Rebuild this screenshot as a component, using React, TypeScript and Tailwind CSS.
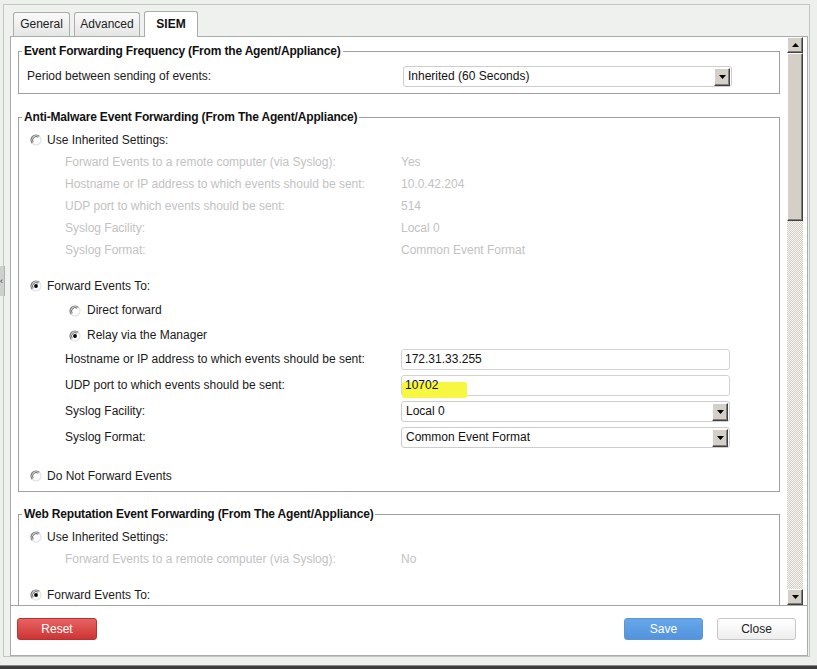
import React from "react";

function Radio({ checked }: { checked?: boolean }) {
  return (
    <svg width="12" height="12" viewBox="0 0 12 12" className="shrink-0">
      <circle cx="6" cy="6" r="5" fill="#ffffff" />
      <path d="M2.46 9.54 A5 5 0 0 1 9.54 2.46" stroke="#7c7c7c" strokeWidth="1.2" fill="none" />
      <path d="M9.54 2.46 A5 5 0 0 1 2.46 9.54" stroke="#e2e2e2" strokeWidth="1.2" fill="none" />
      <path d="M3.2 8.2 A3.6 3.6 0 0 1 8.2 3.2" stroke="#3a3a3a" strokeWidth="0.8" fill="none" />
      {checked && <circle cx="6" cy="6" r="1.9" fill="#000000" />}
    </svg>
  );
}

function ArrowBtn({ up }: { up?: boolean }) {
  return (
    <div className="w-[16px] h-[16px] bg-[#d4d0c8] border border-t-white border-l-white border-r-[#404040] border-b-[#404040] shadow-[inset_-1px_-1px_#808080] flex items-center justify-center shrink-0">
      <svg width="7" height="4" viewBox="0 0 7 4">
        {up ? <path d="M0 4 L3.5 0 L7 4 Z" fill="#000" /> : <path d="M0 0 L7 0 L3.5 4 Z" fill="#000" />}
      </svg>
    </div>
  );
}

function Select({ value }: { value: string }) {
  return (
    <div className="w-[329px] h-[21px] border border-[#cdcdcd] rounded-[3px] bg-white flex items-center pl-[4px] pr-[1px] shrink-0">
      <span className="text-[#111]">{value}</span>
      <div className="ml-auto w-[16px] h-[18px] bg-[#d4d0c8] border border-t-white border-l-white border-r-[#404040] border-b-[#404040] shadow-[inset_-1px_-1px_#808080] flex items-center justify-center">
        <svg width="7" height="4" viewBox="0 0 7 4">
          <path d="M0 0 L7 0 L3.5 4 Z" fill="#000" />
        </svg>
      </div>
    </div>
  );
}

function Input({ value, highlight }: { value: string; highlight?: boolean }) {
  return (
    <div className="relative w-[329px] h-[21px] border border-[#d2d2d2] rounded-[3px] bg-white flex items-center pl-[3px] shrink-0">
      {highlight && (
        <div className="absolute left-0 top-[6px] w-[65px] h-[16px] bg-[#f7f742] rounded-[2px]" />
      )}
      <span className="relative text-[#111]">{value}</span>
    </div>
  );
}

function RadioRow({ label, checked }: { label: string; checked?: boolean }) {
  return (
    <div className="flex items-center pl-[11px] gap-[5px] h-[22px]">
      <Radio checked={checked} />
      <span>{label}</span>
    </div>
  );
}

function SubRadio({ label, checked }: { label: string; checked?: boolean }) {
  return (
    <div className="flex items-center pl-[50px] gap-[6px] h-[25px]">
      <Radio checked={checked} />
      <span>{label}</span>
    </div>
  );
}

function GreyRow({ label, value }: { label: string; value: string }) {
  return (
    <div className="flex items-center h-[22px] pl-[46px] text-[#c2c2c2]">
      <span className="w-[336px] shrink-0">{label}</span>
      <span>{value}</span>
    </div>
  );
}

function CtrlRow({ label, children, mt }: { label: string; children: React.ReactNode; mt: string }) {
  return (
    <div className={`flex items-center h-[21px] pl-[46px] ${mt}`}>
      <span className="w-[336px] shrink-0">{label}</span>
      {children}
    </div>
  );
}

function Legend({ children }: { children: React.ReactNode }) {
  return (
    <legend className="ml-[3px] px-[2px] font-bold leading-[15px] text-[12px] tracking-[-0.17px] text-[#111]">
      {children}
    </legend>
  );
}

export default function App() {
  return (
    <div
      className="relative w-[817px] h-[669px] bg-[#edefed] overflow-hidden text-[12px] leading-[15px] text-[#1a1a1a]"
      style={{ fontFamily: '"Liberation Sans", Arial, sans-serif' }}
    >
      {/* frame */}
      <div className="ml-[3px] mt-[4px] w-[807px] h-[653px] border border-[#c3c7c3] bg-[#eff1ef] flex flex-col pt-[7px]">
        {/* tabs */}
        <div className="flex items-end h-[24px] ml-[9px] gap-[4px]">
          <div className="w-[57px] h-[24px] border border-b-0 border-[#a9aca9] rounded-t-[3px] bg-gradient-to-b from-[#fafafa] to-[#e4e6e4] flex items-center justify-center text-[#222]">
            General
          </div>
          <div className="w-[66px] h-[24px] border border-b-0 border-[#a9aca9] rounded-t-[3px] bg-gradient-to-b from-[#fafafa] to-[#e4e6e4] flex items-center justify-center text-[#222]">
            Advanced
          </div>
          <div className="relative z-10 -mb-px w-[54px] h-[26px] border border-b-0 border-[#a9aca9] rounded-t-[3px] bg-white flex items-center justify-center font-bold text-[#111]">
            SIEM
          </div>
        </div>
        {/* panel */}
        <div className="ml-[6px] mr-[1px] flex-1 border border-[#a9aca9] bg-white flex flex-col">
          <div className="h-[569px] border-b border-[#a3a3a3] flex shrink-0">
            {/* scroll content */}
            <div className="w-[776px] h-[568px] overflow-hidden pt-[7px] px-[7px]">
              <fieldset className="border border-[#a0a0a0] pb-[6px] min-w-0">
                <Legend>Event Forwarding Frequency (From the Agent/Appliance)</Legend>
                <div className="flex items-center h-[21px] mt-[7px] pl-[8px]">
                  <span className="w-[376px] shrink-0">Period between sending of events:</span>
                  <Select value="Inherited (60 Seconds)" />
                </div>
              </fieldset>

              <fieldset className="mt-[16px] border border-[#a0a0a0] pt-[4px] pb-[4px] min-w-0">
                <Legend>Anti-Malware Event Forwarding (From The Agent/Appliance)</Legend>
                <RadioRow label="Use Inherited Settings:" />
                <GreyRow label="Forward Events to a remote computer (via Syslog):" value="Yes" />
                <GreyRow label="Hostname or IP address to which events should be sent:" value="10.0.42.204" />
                <GreyRow label="UDP port to which events should be sent:" value="514" />
                <GreyRow label="Syslog Facility:" value="Local 0" />
                <GreyRow label="Syslog Format:" value="Common Event Format" />
                <div className="mt-[14px]">
                  <RadioRow label="Forward Events To:" checked />
                </div>
                <div className="mt-px">
                  <SubRadio label="Direct forward" />
                  <SubRadio label="Relay via the Manager" checked />
                </div>
                <CtrlRow label="Hostname or IP address to which events should be sent:" mt="mt-px">
                  <Input value="172.31.33.255" />
                </CtrlRow>
                <CtrlRow label="UDP port to which events should be sent:" mt="mt-[5px]">
                  <Input value="10702" highlight />
                </CtrlRow>
                <CtrlRow label="Syslog Facility:" mt="mt-[5px]">
                  <Select value="Local 0" />
                </CtrlRow>
                <CtrlRow label="Syslog Format:" mt="mt-[5px]">
                  <Select value="Common Event Format" />
                </CtrlRow>
                <div className="mt-[17px]">
                  <RadioRow label="Do Not Forward Events" />
                </div>
              </fieldset>

              <fieldset className="mt-[15px] border border-[#a0a0a0] pt-[4px] pb-[4px] min-w-0">
                <Legend>Web Reputation Event Forwarding (From The Agent/Appliance)</Legend>
                <RadioRow label="Use Inherited Settings:" />
                <GreyRow label="Forward Events to a remote computer (via Syslog):" value="No" />
                <div className="mt-[14px]">
                  <RadioRow label="Forward Events To:" checked />
                </div>
              </fieldset>
            </div>
            {/* scrollbar */}
            <div className="w-[16px] h-[568px] flex flex-col">
              <ArrowBtn up />
              <div className="h-[168px] bg-[#d4d0c8] border border-t-white border-l-white border-r-[#404040] border-b-[#404040] shadow-[inset_-1px_-1px_#808080]" />
              <div className="flex-1 bg-[repeating-conic-gradient(#d4d0c8_0%_25%,#f6f4f0_0%_50%)] bg-[length:2px_2px]" />
              <ArrowBtn />
            </div>
          </div>
          {/* buttons */}
          <div className="flex items-start pt-[12px] pl-[6px] pr-[11px]">
            <button className="w-[80px] h-[22px] rounded-[3px] border border-[#b83232] bg-gradient-to-b from-[#e86262] to-[#cc3434] text-white text-[12px]">
              Reset
            </button>
            <button className="ml-auto w-[79px] h-[22px] rounded-[3px] border border-[#5a95d6] bg-gradient-to-b from-[#67a7ea] to-[#5293dc] text-white text-[12px]">
              Save
            </button>
            <button className="ml-[14px] w-[79px] h-[22px] rounded-[3px] border border-[#c6c6c6] bg-gradient-to-b from-[#ffffff] to-[#eeeeee] text-[#222] text-[12px]">
              Close
            </button>
          </div>
        </div>
      </div>
      {/* bottom dark strip */}
      <div className="absolute left-0 bottom-0 w-full h-[4px] bg-[#3c3c3c] border-t border-[#8a8a8a]" />
      {/* left edge handle behind window */}
      <div className="absolute left-0 top-[266px] w-[5px] h-[30px] bg-[#cfcfcf] border-r border-[#b0b0b0] flex items-center overflow-hidden text-[9px] text-[#333]">
        ‹
      </div>
    </div>
  );
}
